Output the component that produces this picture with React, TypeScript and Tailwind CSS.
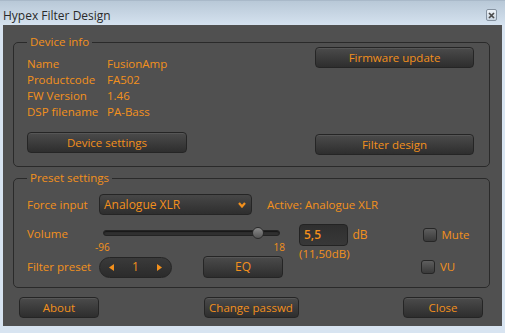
import React from "react";

const btn =
  "rounded-[4px] border border-[#252525] bg-linear-to-b from-[#4b4b4b] to-[#2e2e2e] shadow-[inset_0_1px_0_rgba(255,255,255,0.07)] text-[11.5px] text-[#f3901c] leading-none flex items-center justify-center";

function Button({ label, className }: { label: string; className: string }) {
  return <div className={`${btn} ${className}`}>{label}</div>;
}

function Group({ title, className, children }: { title: string; className: string; children: React.ReactNode }) {
  return (
    <div className={`relative mx-[10px] w-[477px] rounded-[5px] border border-[#2a2a2a] ${className}`}>
      <span className="absolute left-[13px] top-[-9px] bg-[#505050] px-[3px] text-[11.5px] leading-[16px] text-[#f3901c]">
        {title}
      </span>
      {children}
    </div>
  );
}

function Checkbox({ label }: { label: string }) {
  return (
    <div className="flex items-center gap-[5px]">
      <div className="w-[14px] h-[14px] rounded-[3px] border border-[#262626] bg-linear-to-b from-[#5e5e5e] to-[#3a3a3a]" />
      <span className="text-[11.5px] text-[#f3901c]">{label}</span>
    </div>
  );
}

const info = [
  ["Name", "FusionAmp"],
  ["Productcode", "FA502"],
  ["FW Version", "1.46"],
  ["DSP filename", "PA-Bass"],
];

export default function App() {
  return (
    <div className="w-[505px] h-[333px] overflow-hidden bg-[#d8e4f1] font-['Open_Sans',sans-serif]">
      {/* title bar */}
      <div className="h-[25px] flex items-start justify-between bg-linear-to-b from-[#b8c8d7] to-[#d5e2ef] border-t border-[#a9b9c9]">
        <span className="pl-[3px] pt-[7px] text-[12px] leading-[16px] text-[#2a2a2a]">Hypex Filter Design</span>
        <div className="mt-[8px] mr-[8px] w-[11px] h-[12px] rounded-[2px] border border-[#8592a0] bg-linear-to-b from-[#eef3f8] to-[#c9d5e1] flex items-center justify-center">
          <svg width="7" height="7" viewBox="0 0 7 7">
            <path d="M1 1 L6 6 M6 1 L1 6" stroke="#4a4a4a" strokeWidth="1.7" />
          </svg>
        </div>
      </div>

      <div className="ml-[3px] w-[499px] h-[301px] bg-[#505050] flex flex-col">
        {/* Device info */}
        <Group title="Device info" className="mt-[17px] h-[125px] flex pl-[13px] pr-[15px]">
          <div className="w-[160px] pt-[13px] flex flex-col">
            {info.map(([k, v]) => (
              <div key={k} className="flex h-[16px] items-center text-[11.5px] text-[#f3901c]">
                <span className="w-[80px]">{k}</span>
                <span>{v}</span>
              </div>
            ))}
            <Button label="Device settings" className="mt-[12px] w-[160px] h-[21px]" />
          </div>
          <div className="ml-auto w-[159px] pt-[4px] pb-[11px] flex flex-col justify-between">
            <Button label="Firmware update" className="h-[21px]" />
            <Button label="Filter design" className="h-[21px]" />
          </div>
        </Group>

        {/* Preset settings */}
        <Group title="Preset settings" className="mt-[11px] h-[110px] pl-[13px] pt-[15px]">
          <div className="flex items-center h-[21px]">
            <span className="w-[72px] text-[11.5px] text-[#f3901c]">Force input</span>
            <div className="w-[153px] h-[21px] rounded-[4px] border border-[#252525] bg-linear-to-b from-[#474747] to-[#2e2e2e] flex items-center justify-between pl-[4px] pr-[5px]">
              <span className="text-[12px] text-[#f3901c]">Analogue XLR</span>
              <svg width="8" height="6" viewBox="0 0 8 6">
                <path d="M1 1 L4 4.5 L7 1" fill="none" stroke="#f3901c" strokeWidth="2.2" />
              </svg>
            </div>
            <span className="ml-[15px] text-[11.5px] text-[#f3901c]">Active: Analogue XLR</span>
          </div>

          <div className="flex items-start mt-[9px]">
            <span className="w-[72px] h-[20px] leading-[20px] text-[11.5px] text-[#f3901c]">Volume</span>
            <div className="w-[190px] pt-[6px] flex flex-col">
              <div className="relative ml-[4px] w-[177px] h-[6px] rounded-full border border-[#232323] bg-[#2f2f2f] shadow-[inset_0_1px_1px_rgba(0,0,0,0.5)]">
                <div className="absolute left-[148px] top-[-4px] w-[12px] h-[12px] rounded-full border border-[#2a2a2a] bg-linear-to-b from-[#8a8a8a] to-[#555]" />
              </div>
              <div className="mt-[5px] ml-[-4px] pr-[4px] flex justify-between text-[10px] leading-[12px] text-[#f3901c]">
                <span>-96</span>
                <span>18</span>
              </div>
            </div>
            <div className="ml-[10px] flex flex-col">
              <div className="w-[49px] h-[22px] rounded-[4px] border border-[#232323] bg-linear-to-b from-[#2f2f2f] to-[#383838] flex items-center pl-[4px] text-[12px] font-semibold text-[#f3901c]">
                5,5
              </div>
              <span className="mt-[2px] text-[11.5px] leading-[12px] text-[#f3901c]">(11,50dB)</span>
            </div>
            <span className="ml-[3px] w-[70px] h-[22px] leading-[22px] text-[12px] text-[#f3901c]">dB</span>
            <div className="h-[22px] flex items-center">
              <Checkbox label="Mute" />
            </div>
          </div>

          <div className="flex items-center h-[22px] mt-[-4px]">
            <span className="w-[72px] text-[11.5px] text-[#f3901c]">Filter preset</span>
            <div className="w-[73px] h-[21px] rounded-full border border-[#252525] bg-linear-to-b from-[#3a3a3a] to-[#2b2b2b] flex items-center justify-between px-[9px]">
              <svg width="5" height="7" viewBox="0 0 5 7">
                <path d="M5 0 L0 3.5 L5 7 Z" fill="#f3901c" />
              </svg>
              <span className="text-[12px] text-[#f3901c]">1</span>
              <svg width="5" height="7" viewBox="0 0 5 7">
                <path d="M0 0 L5 3.5 L0 7 Z" fill="#f3901c" />
              </svg>
            </div>
            <Button label="EQ" className="ml-[31px] w-[80px] h-[22px] text-[12px]" />
            <div className="ml-[138px]">
              <Checkbox label="VU" />
            </div>
          </div>
        </Group>

        <div className="mt-[9px] flex justify-between pl-[16px] pr-[19px]">
          <Button label="About" className="w-[80px] h-[21px]" />
          <Button label="Change passwd" className="w-[95px] h-[21px]" />
          <Button label="Close" className="w-[80px] h-[21px]" />
        </div>
      </div>
    </div>
  );
}
